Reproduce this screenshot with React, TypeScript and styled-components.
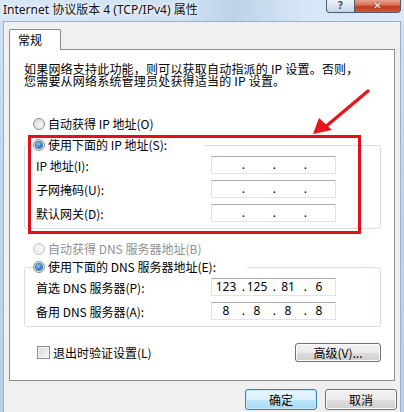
import React, { FC } from 'react';

import styled, { createGlobalStyle } from 'styled-components';

const GlobalStyle = createGlobalStyle`
  html, body {
    margin: 0;
    padding: 0;
    background: #ffffff;
  }
  body {
    font-family: "Noto Sans CJK SC", "Noto Sans", sans-serif;
    font-size: 12px;
    color: #000000;
  }
`;

interface IpFieldProps {
  values?: string[];
}

const IpField: FC<IpFieldProps> = ({ values = ['', '', '', ''] }) => (
  <IpBox>
    {values.map((value, idx) => (
      <React.Fragment key={idx}>
        <IpPart>{value}</IpPart>
        {idx < 3 && <IpDot>.</IpDot>}
      </React.Fragment>
    ))}
  </IpBox>
);

const RadioMark: FC<{ checked?: boolean; disabled?: boolean }> = ({ checked, disabled }) => (
  <Radio $disabled={disabled}>{checked && <RadioDot />}</Radio>
);

export const App: FC = () => {
  return (
    <>
      <GlobalStyle />
      <Window>
        <TitleBar>
          <Title>Internet 协议版本 4 (TCP/IPv4) 属性</Title>
          <CaptionGroup>
            <HelpCaption>?</HelpCaption>
            <CloseCaption>✕</CloseCaption>
          </CaptionGroup>
        </TitleBar>
        <Client>
          <TabStrip>
            <Tab>常规</Tab>
          </TabStrip>
          <Panel>
            <Intro>
              如果网络支持此功能，则可以获取自动指派的 IP 设置。否则，
              <br />
              您需要从网络系统管理员处获得适当的 IP 设置。
            </Intro>
            <OptionRow $top={30}>
              <RadioMark />
              自动获得 IP 地址(O)
            </OptionRow>
            <Group $top={7}>
              <Legend $width={171}>
                <RadioMark checked />
                使用下面的 IP 地址(S):
              </Legend>
              <FieldRow>
                <FieldLabel>IP 地址(I):</FieldLabel>
                <IpField />
              </FieldRow>
              <FieldRow>
                <FieldLabel>子网掩码(U):</FieldLabel>
                <IpField />
              </FieldRow>
              <FieldRow>
                <FieldLabel>默认网关(D):</FieldLabel>
                <IpField />
              </FieldRow>
            </Group>
            <OptionRow $top={13} $disabled>
              <RadioMark disabled />
              自动获得 DNS 服务器地址(B)
            </OptionRow>
            <Group $top={4}>
              <Legend $width={214}>
                <RadioMark checked />
                使用下面的 DNS 服务器地址(E):
              </Legend>
              <FieldRow>
                <FieldLabel>首选 DNS 服务器(P):</FieldLabel>
                <IpField values={['123', '125', '81', '6']} />
              </FieldRow>
              <FieldRow>
                <FieldLabel>备用 DNS 服务器(A):</FieldLabel>
                <IpField values={['8', '8', '8', '8']} />
              </FieldRow>
            </Group>
            <BottomRow>
              <CheckLabel>
                <CheckBox />
                退出时验证设置(L)
              </CheckLabel>
              <Button $width={86} $height={19}>
                高级(V)...
              </Button>
            </BottomRow>
          </Panel>
          <DialogButtons>
            <Button $width={72} $height={21} $primary>
              确定
            </Button>
            <Button $width={72} $height={21}>
              取消
            </Button>
          </DialogButtons>
        </Client>
        <Highlight />
        <Arrow width="60" height="56" viewBox="0 0 60 56">
          <path d="M58 2 L14 39" stroke="#e8141b" strokeWidth="3.2" strokeLinecap="round" />
          <path d="M3 45 L9 29 L22 41 Z" fill="#e8141b" />
        </Arrow>
      </Window>
    </>
  );
};

const Window = styled.div`
  position: relative;
  width: 404px;
  height: 412px;
  overflow: hidden;
  display: flex;
  flex-direction: column;
  background: linear-gradient(180deg, #cfe0f2 0%, #c2d6ec 40%, #b8cfe8 100%);
`;

const TitleBar = styled.div`
  height: 21px;
  flex-shrink: 0;
  display: grid;
  grid-template-columns: 1fr 75px;
  align-items: start;
  padding: 0 3px 0 3px;
  background: linear-gradient(90deg, #d8e7f6 0%, #cfe1f3 45%, #bdd2ea 58%, #c6d9ee 64%, #d6e6f6 75%, #dce9f7 100%);
`;

const Title = styled.div`
  font-family: "Noto Sans", "Noto Sans CJK SC", sans-serif;
  font-size: 12px;
  line-height: 19px;
  color: #111111;
  white-space: nowrap;
  text-shadow: 0 0 6px #ffffff, 0 0 3px #ffffff;
`;

const CaptionGroup = styled.div`
  display: grid;
  grid-template-columns: 28px 1fr;
  height: 13px;
  border: 1px solid #4d5b6e;
  border-top: none;
  border-radius: 0 0 4px 4px;
  overflow: hidden;
  box-sizing: border-box;
  background: #c9472c;
`;

const HelpCaption = styled.div`
  display: flex;
  align-items: center;
  justify-content: center;
  border-right: 1px solid #4d5b6e;
  background: linear-gradient(180deg, #eef3f9 0%, #d9e4f0 50%, #c3d4e7 100%);
  color: #4a596c;
  font-family: "DejaVu Sans", sans-serif;
  font-size: 10px;
  font-weight: bold;
  line-height: 12px;
`;

const CloseCaption = styled.div`
  display: flex;
  align-items: center;
  justify-content: center;
  background: linear-gradient(180deg, #e7a493 0%, #d76a4e 45%, #c3391f 55%, #d5563a 100%);
  color: #ffffff;
  font-family: "DejaVu Sans", sans-serif;
  font-size: 10px;
  font-weight: bold;
  line-height: 12px;
  text-shadow: 0 0 2px #5a2418;
`;

const Client = styled.div`
  flex: 1;
  margin: 0 3px 0 3px;
  background: #f0f0f0;
  border: 1px solid #9fb0c6;
  border-bottom: none;
  display: flex;
  flex-direction: column;
`;

const TabStrip = styled.div`
  display: flex;
  padding: 7px 0 0 5px;
`;

const Tab = styled.div`
  position: relative;
  z-index: 1;
  width: 52px;
  height: 21px;
  box-sizing: border-box;
  margin-bottom: -1px;
  padding: 1px 0 0 8px;
  background: #ffffff;
  border: 1px solid #898c95;
  border-bottom: none;
  border-radius: 2px 2px 0 0;
  line-height: 18px;
`;

const Panel = styled.div`
  width: 386px;
  height: 332px;
  box-sizing: border-box;
  margin-left: 5px;
  padding: 0 13px 0 14px;
  background: #ffffff;
  border: 1px solid #898c95;
  display: flex;
  flex-direction: column;
`;

const Intro = styled.p`
  margin: 13px 0 0;
  line-height: 12px;
  white-space: nowrap;
  letter-spacing: 0.2px;
`;

const OptionRow = styled.div<{ $top: number; $disabled?: boolean }>`
  display: flex;
  align-items: center;
  gap: 3px;
  height: 14px;
  margin: ${({ $top }) => $top}px 0 0 9px;
  line-height: 14px;
  color: ${({ $disabled }) => ($disabled ? '#8f8f8f' : '#000000')};
`;

const Radio = styled.span<{ $disabled?: boolean }>`
  width: 12px;
  height: 12px;
  box-sizing: border-box;
  border-radius: 50%;
  border: 1px solid ${({ $disabled }) => ($disabled ? '#c4c6c8' : '#8d9296')};
  background: ${({ $disabled }) =>
    $disabled
      ? 'radial-gradient(circle at 50% 50%, #f6f6f6 0%, #ececec 100%)'
      : 'radial-gradient(circle at 60% 65%, #f7f7f7 0%, #e3e3e3 55%, #cfd0d1 100%)'};
  display: flex;
  align-items: center;
  justify-content: center;
  flex-shrink: 0;
`;

const RadioDot = styled.span`
  width: 6px;
  height: 6px;
  border-radius: 50%;
  background: radial-gradient(circle at 40% 35%, #8fd0ff 0%, #2f7fcf 55%, #123f7a 100%);
  box-shadow: 0 0 0 1px #4c7fae;
`;

const Group = styled.fieldset<{ $top: number }>`
  margin: ${({ $top }) => $top}px 0 0;
  padding: 4px 0 6px 11px;
  border: 1px solid #d5dfe5;
  border-radius: 3px;
  display: flex;
  flex-direction: column;
  gap: 6px;
  min-width: 0;
`;

const Legend = styled.legend<{ $width: number }>`
  display: flex;
  align-items: center;
  gap: 3px;
  width: ${({ $width }) => $width}px;
  height: 14px;
  margin-left: -3px;
  padding: 0;
  line-height: 14px;
  background: #ffffff;
`;

const FieldRow = styled.div`
  display: flex;
  align-items: center;
  height: 18px;
`;

const FieldLabel = styled.span`
  width: 175px;
  flex-shrink: 0;
`;

const IpBox = styled.div`
  width: 125px;
  height: 18px;
  box-sizing: border-box;
  display: flex;
  align-items: center;
  padding-left: 3px;
  border: 1px solid #e2e3ea;
  border-top-color: #abadb3;
  background: #ffffff;
  font-family: "Noto Sans", "Noto Sans CJK SC", sans-serif;
  font-size: 12px;
  line-height: 16px;
`;

const IpPart = styled.span`
  width: 22px;
  text-align: center;
`;

const IpDot = styled.span`
  width: 9px;
  text-align: right;
  padding-right: 1px;
  box-sizing: border-box;
`;

const BottomRow = styled.div`
  display: flex;
  align-items: center;
  justify-content: space-between;
  margin-top: 16px;
  padding: 0 0 0 13px;
`;

const CheckLabel = styled.div`
  display: flex;
  align-items: center;
  gap: 3px;
  line-height: 14px;
`;

const CheckBox = styled.span`
  width: 13px;
  height: 13px;
  box-sizing: border-box;
  border: 1px solid #8e8f8f;
  background: linear-gradient(135deg, #d6d6d6 0%, #e9e9e9 55%, #f8f8f8 100%);
  box-shadow: inset 0 0 0 1px #f4f4f4;
`;

const Button = styled.div<{ $width: number; $height: number; $primary?: boolean }>`
  width: ${({ $width }) => $width}px;
  height: ${({ $height }) => $height}px;
  box-sizing: border-box;
  display: flex;
  align-items: center;
  justify-content: center;
  border: 1px solid ${({ $primary }) => ($primary ? '#3c7fb1' : '#707070')};
  border-radius: 3px;
  background: ${({ $primary }) =>
    $primary
      ? 'linear-gradient(180deg, #eaf6fd 0%, #d9f0fc 50%, #bee6fd 51%, #a7d9f5 100%)'
      : 'linear-gradient(180deg, #f2f2f2 0%, #ebebeb 50%, #dddddd 51%, #cfcfcf 100%)'};
  box-shadow: inset 0 0 0 1px ${({ $primary }) => ($primary ? '#c6e9fb' : '#fbfbfb')};
  line-height: 14px;
`;

const DialogButtons = styled.div`
  display: flex;
  justify-content: flex-end;
  gap: 8px;
  margin-top: 8px;
  padding-right: 3px;
`;

const Highlight = styled.div`
  position: absolute;
  left: 28px;
  top: 135px;
  width: 333px;
  height: 99px;
  box-sizing: border-box;
  border: 3px solid #e3101b;
  pointer-events: none;
`;

const Arrow = styled.svg`
  position: absolute;
  left: 310px;
  top: 89px;
  pointer-events: none;
`;

export default App;
